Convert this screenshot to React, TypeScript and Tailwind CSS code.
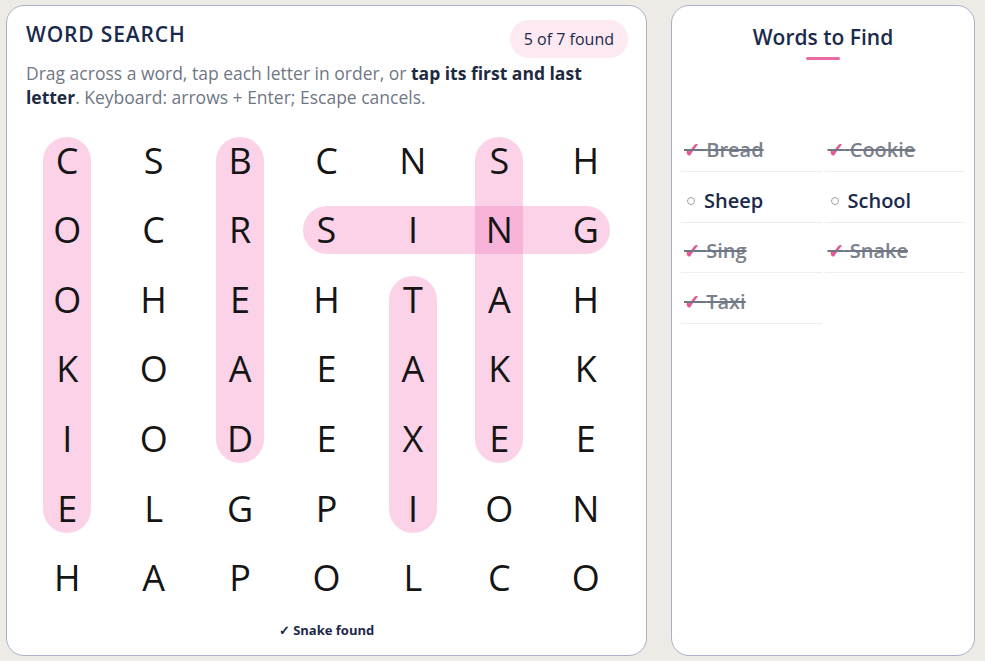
import React from 'react';

const GRID = [
  'CSBCNSH',
  'OCRSING',
  'OHEHTAH',
  'KOAEAKK',
  'IODEXEE',
  'ELGPION',
  'HAPOLCO',
];

const COL_W = 605 / 7;
const ROW_H = 487 / 7;
const PILL = 48;

// 找到的单词：起点行列 + 终点行列
const FOUND_LINES = [
  { r1: 0, c1: 0, r2: 5, c2: 0 }, // Cookie
  { r1: 0, c1: 2, r2: 4, c2: 2 }, // Bread
  { r1: 1, c1: 3, r2: 1, c2: 6 }, // Sing
  { r1: 2, c1: 4, r2: 5, c2: 4 }, // Taxi
  { r1: 0, c1: 5, r2: 4, c2: 5 }, // Snake
];

const WORDS = [
  { name: 'Bread', found: true },
  { name: 'Cookie', found: true },
  { name: 'Sheep', found: false },
  { name: 'School', found: false },
  { name: 'Sing', found: true },
  { name: 'Snake', found: true },
  { name: 'Taxi', found: true },
];

const FONT = { fontFamily: '"Open Sans", "Noto Sans", sans-serif' };

const App: React.FC = () => {
  return (
    <div
      className="w-[985px] h-[661px] bg-[#eeebe6] flex pt-[5px] pl-[6px] gap-[24px]"
      style={FONT}
    >
      {/* Board card */}
      <section className="w-[641px] h-[651px] bg-white border border-[#a9b0c7] rounded-[18px] px-[17px] pt-[14px] flex flex-col">
        <div className="flex justify-between items-start pl-[2px] pr-[1px]">
          <h1 className="text-[21px] leading-[28px] font-semibold tracking-[0.04em] text-[#1b2a4a]">
            WORD SEARCH
          </h1>
          <span className="h-[38px] px-[14px] rounded-full bg-[#fde9f2] text-[16px] font-medium text-[#1b2a4a] flex items-center">
            5 of 7 found
          </span>
        </div>

        <p className="mt-[3px] pl-[2px] max-w-[575px] text-[17.5px] leading-[24px] text-[#6f7784]">
          Drag across a word, tap each letter in order, or{' '}
          <strong className="font-bold text-[#1e2a40]">tap its first and last letter</strong>. Keyboard: arrows + Enter; Escape cancels.
        </p>

        {/* Grid */}
        <div className="relative mt-[17px] w-[605px] h-[487px]">
          {FOUND_LINES.map((l, i) => {
            const x1 = Math.min(l.c1, l.c2) * COL_W + COL_W / 2 - PILL / 2;
            const y1 = Math.min(l.r1, l.r2) * ROW_H + ROW_H / 2 - PILL / 2;
            const w = Math.abs(l.c2 - l.c1) * COL_W + PILL;
            const h = Math.abs(l.r2 - l.r1) * ROW_H + PILL;
            return (
              <div
                key={i}
                className="absolute rounded-full bg-[rgba(244,114,182,0.32)]"
                style={{ left: x1, top: y1, width: w, height: h }}
              />
            );
          })}
          <div className="relative grid grid-cols-7 grid-rows-7 w-full h-full">
            {GRID.map((row, r) =>
              row.split('').map((ch, c) => (
                <div
                  key={`${r}-${c}`}
                  className="flex items-center justify-center text-[36px] leading-none text-[#151515]"
                >
                  {ch}
                </div>
              ))
            )}
          </div>
        </div>

        <div className="mt-[7px] text-center text-[13px] leading-[20px] font-bold text-[#1b2a4a]">
          ✓ Snake found
        </div>
      </section>

      {/* Words list card */}
      <aside className="w-[304px] h-[651px] bg-white border border-[#a9b0c7] rounded-[18px] px-[9px] pt-[17px] flex flex-col">
        <h2 className="text-center text-[21px] leading-[28px] font-semibold text-[#1b2a4a]">
          Words to Find
        </h2>
        <div className="mx-auto mt-[6px] w-[34px] h-[3px] rounded-full bg-[#ec6aa3]" />

        <ul className="mt-[69px] grid grid-cols-2 gap-x-[3px] gap-y-[7.5px]">
          {WORDS.map((w) => (
            <li
              key={w.name}
              className="py-[8px] border-b border-[#eceef2] flex items-center text-[20px] leading-[26px]"
            >
              {w.found ? (
                <span className="pl-[3px] line-through decoration-[#6f7784] decoration-[1.5px] font-semibold text-[#7b818c]">
                  <span className="text-[#e5578f] text-[20px]">✓</span> {w.name}
                </span>
              ) : (
                <>
                  <span className="ml-[6px] w-[8px] h-[8px] rounded-full border border-[#9aa1ae]" />
                  <span className="ml-[9px] font-semibold text-[#1b2a4a]">{w.name}</span>
                </>
              )}
            </li>
          ))}
        </ul>
      </aside>
    </div>
  );
};

export default App;
